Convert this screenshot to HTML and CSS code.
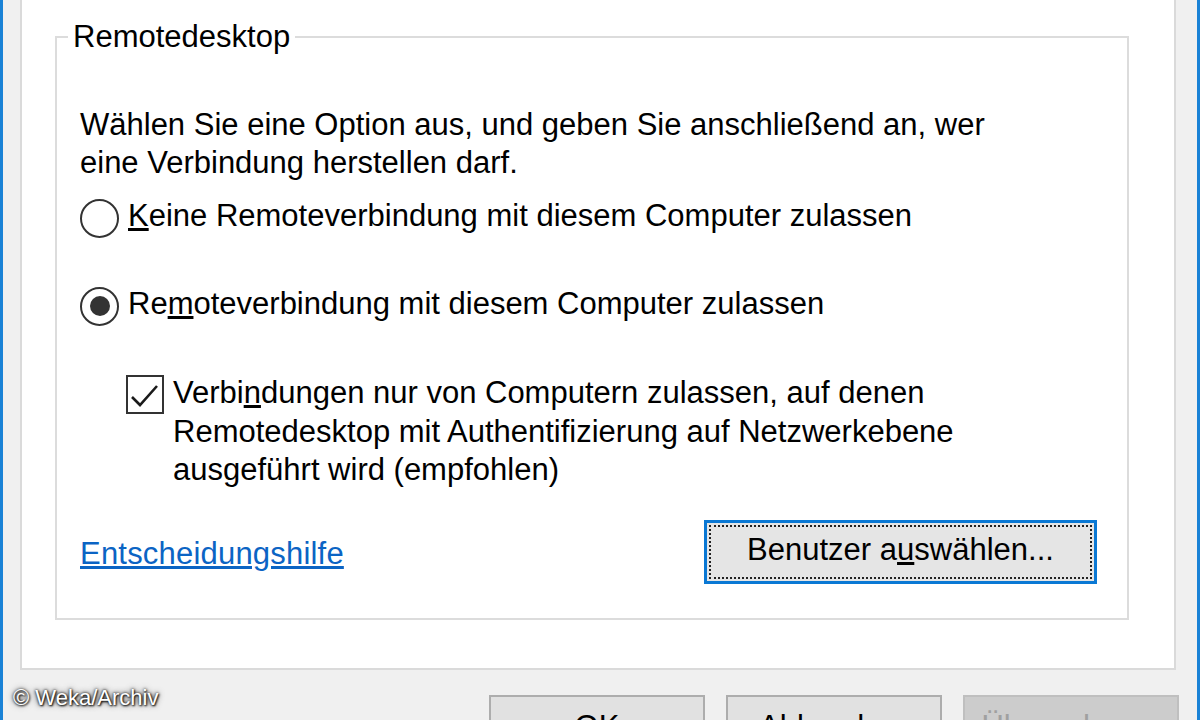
FILE: index.html
```html
<!DOCTYPE html>
<html lang="de">
<head>
    <meta charset="UTF-8">
    <meta name="viewport" content="width=device-width, initial-scale=1.0">
    <title>Remotedesktop</title>
    <link rel="stylesheet" href="styles.css">
</head>
<body>
    <div class="window">
        <div class="panel">
            <fieldset class="group">
                <legend>Remotedesktop</legend>
                <p class="intro">Wählen Sie eine Option aus, und geben Sie anschließend an, wer<br>eine Verbindung herstellen darf.</p>

                <label class="option option-first">
                    <span class="radio"></span>
                    <span class="option-text"><u>K</u>eine Remoteverbindung mit diesem Computer zulassen</span>
                </label>
                <label class="option">
                    <span class="radio radio-checked"></span>
                    <span class="option-text">Re<u>m</u>oteverbindung mit diesem Computer zulassen</span>
                </label>

                <div class="check-row">
                    <span class="checkbox">
                        <svg width="34" height="35" viewBox="0 0 34 35">
                            <path d="M4 20 L12 28 L29 9" fill="none" stroke="#1a1a1a" stroke-width="2.6"/>
                        </svg>
                    </span>
                    <span class="check-text">Verbi<u>n</u>dungen nur von Computern zulassen, auf denen<br>Remotedesktop mit Authentifizierung auf Netzwerkebene<br>ausgeführt wird (empfohlen)</span>
                </div>

                <div class="actions">
                    <a class="link" href="#">Entscheidungshilfe</a>
                    <button class="btn btn-focus"><span class="focus-ring">Benutzer a<u>u</u>swählen...</span></button>
                </div>
            </fieldset>
        </div>

        <div class="footer">
            <button class="btn btn-footer">OK</button>
            <button class="btn btn-footer">Abbrechen</button>
            <button class="btn btn-footer btn-disabled">Übernehmen</button>
        </div>

        <div class="copyright">© Weka/Archiv</div>
    </div>
</body>
</html>
```

FILE: styles.css
```css
body {
    margin: 0;
    font-family: "Liberation Sans", Arial, sans-serif;
    color: #000;
    overflow: hidden;
}
.window {
    position: relative;
    box-sizing: border-box;
    height: 720px;
    overflow: hidden;
    padding: 0 21px 0 17px;
    background-color: #f0f0f0;
    border-left: 3px solid #1a82d6;
    border-right: 3px solid #1a82d6;
}
.panel {
    background-color: #fff;
    border: 2px solid #dadada;
    border-top: none;
    padding: 18px 45px 48px 33px;
}
.group {
    margin: 0;
    padding: 52px 30px 34px 23px;
    border: 2px solid #dcdcdc;
    font-size: 31px;
}
.group legend {
    margin-left: -12px;
    padding: 0 5px;
    line-height: 38px;
}
.intro {
    margin: -2px 0 0;
    line-height: 38px;
}
.option {
    display: flex;
    align-items: center;
    gap: 9px;
    height: 40px;
    margin-top: 48px;
    line-height: 38px;
}
.option-first {
    margin-top: 16px;
}
.option-text {
    position: relative;
    top: -2px;
}
.radio {
    display: flex;
    align-items: center;
    justify-content: center;
    box-sizing: border-box;
    width: 39px;
    height: 39px;
    border: 2px solid #333;
    border-radius: 50%;
    background-color: #fff;
}
.radio-checked::after {
    content: "";
    width: 20px;
    height: 20px;
    border-radius: 50%;
    background-color: #333;
}
.check-row {
    display: flex;
    align-items: flex-start;
    gap: 9px;
    margin: 48px 0 0 46px;
}
.checkbox {
    display: flex;
    align-items: center;
    justify-content: center;
    box-sizing: border-box;
    flex: none;
    width: 38px;
    height: 39px;
    margin-top: 1px;
    border: 2px solid #333;
    background-color: #fff;
}
.check-text {
    line-height: 38.5px;
}
.actions {
    display: flex;
    align-items: center;
    justify-content: space-between;
    margin-top: 30.5px;
}
.link {
    color: #0b64c4;
    text-decoration: underline;
    line-height: 38px;
    letter-spacing: 0.2px;
    padding-top: 4px;
}
.btn {
    box-sizing: border-box;
    height: 64px;
    margin: 0;
    font-family: "Liberation Sans", Arial, sans-serif;
    font-size: 31px;
    color: #000;
    background-color: #e1e1e1;
    border: 2px solid #adadad;
    cursor: pointer;
}
.btn-focus {
    width: 393px;
    padding: 2px;
    border: 3px solid #0a78d4;
    background-color: #e5e5e5;
}
.focus-ring {
    display: flex;
    align-items: center;
    justify-content: center;
    box-sizing: border-box;
    height: 100%;
    padding-bottom: 4px;
    border: 2px dotted #222;
}
.footer {
    display: flex;
    justify-content: flex-end;
    gap: 21px;
    margin-right: -3px;
    padding-top: 25px;
}
.btn-footer {
    width: 216px;
}
.btn-disabled {
    color: #a0a0a0;
    background-color: #cccccc;
    border-color: #bfbfbf;
}
.copyright {
    position: absolute;
    left: 10px;
    top: 685px;
    font-size: 22px;
    color: #fff;
    text-shadow: 0 0 3px #000, 1px 1px 2px #222, 0 0 6px #444;
}
```
